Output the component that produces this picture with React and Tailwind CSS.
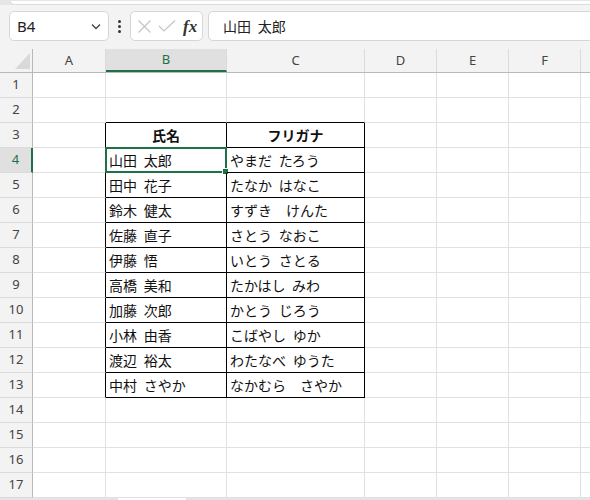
import React from 'react';

const cols = [
  { key: 'A', w: 'w-[73px]' },
  { key: 'B', w: 'w-[121px]' },
  { key: 'C', w: 'w-[138px]' },
  { key: 'D', w: 'w-[72px]' },
  { key: 'E', w: 'w-[72px]' },
  { key: 'F', w: 'w-[72px]' },
  { key: 'G', w: 'w-[72px]' },
];

const people = [
  ['山田 太郎', 'やまだ たろう'],
  ['田中 花子', 'たなか はなこ'],
  ['鈴木 健太', 'すずき　けんた'],
  ['佐藤 直子', 'さとう なおこ'],
  ['伊藤 悟', 'いとう さとる'],
  ['高橋 美和', 'たかはし みわ'],
  ['加藤 次郎', 'かとう じろう'],
  ['小林 由香', 'こばやし ゆか'],
  ['渡辺 裕太', 'わたなべ ゆうた'],
  ['中村 さやか', 'なかむら　さやか'],
];

const font = { fontFamily: '"Noto Sans", "Noto Sans CJK JP", sans-serif' };

function FormulaBar() {
  return (
    <div className="bg-[#f3f3f3]">
      <div className="h-[5px] bg-[#e6e6e6] pt-px">
        <div className="ml-[10px] h-full rounded-bl-md border-b border-l border-[#dcdcdc] bg-white" />
      </div>
      <div className="flex items-center pl-[9px] pt-[6px] pb-[8px]">
        <div className="flex h-[30px] w-[100px] items-center justify-between rounded-[5px] border border-[#d6d6d6] bg-white pl-[7px] pr-[6px] text-[15px] text-[#222]">
          <span className="mt-px">B4</span>
          <svg width="12" height="12" viewBox="0 0 12 12" fill="none" stroke="#444" strokeWidth="1.3">
            <path d="M2 4.5 L6 8.5 L10 4.5" />
          </svg>
        </div>
        <div className="flex w-[21px] flex-col items-center gap-[2px]">
          <span className="h-[3px] w-[3px] rounded-full bg-[#333]" />
          <span className="h-[3px] w-[3px] rounded-full bg-[#333]" />
          <span className="h-[3px] w-[3px] rounded-full bg-[#333]" />
        </div>
        <div className="flex h-[30px] w-[73px] items-center rounded-[5px] border border-[#d6d6d6] bg-white pl-[6px]">
          <svg width="15" height="15" viewBox="0 0 15 15" fill="none" stroke="#c4c4c4" strokeWidth="1.2">
            <path d="M1.5 1.5 L13.5 13.5 M13.5 1.5 L1.5 13.5" />
          </svg>
          <svg className="ml-[6px]" width="18" height="14" viewBox="0 0 18 14" fill="none" stroke="#c4c4c4" strokeWidth="1.2">
            <path d="M1 7 L6 12 L17 1.5" />
          </svg>
          <span className="ml-[7px] text-[17px] font-bold italic leading-none text-[#333]" style={{ fontFamily: '"Liberation Serif", serif' }}>
            fx
          </span>
        </div>
        <div className="ml-[5px] -mr-[4px] flex h-[30px] flex-1 items-center rounded-[5px] border border-[#d6d6d6] bg-white pl-[14px] text-[14px] text-[#222] [word-spacing:3px]">
          山田 太郎
        </div>
      </div>
    </div>
  );
}

function Cell({ col, row, children }) {
  const inTable = (col === 'B' || col === 'C') && row >= 3 && row <= 13;
  const aboveTable = (col === 'B' || col === 'C') && row === 2;
  const leftOfTable = col === 'A' && row >= 3 && row <= 13;
  const rightBlack = inTable || leftOfTable;
  const bottomBlack = inTable || aboveTable;
  const width = cols.find((c) => c.key === col).w;
  const header = row === 3;
  return (
    <div
      className={`relative flex h-[25px] shrink-0 items-center border-r border-b px-[3px] text-[14px] text-[#111] [word-spacing:3px] ${width} ${
        rightBlack ? 'border-r-black' : 'border-r-[#e1e1e1]'
      } ${bottomBlack ? 'border-b-black' : 'border-b-[#e1e1e1]'} ${header ? 'justify-center font-bold' : ''}`}
    >
      <span className="whitespace-nowrap">{children}</span>
      {col === 'B' && row === 4 && (
        <div className="absolute -left-px -top-px h-[26px] w-[122px] border-2 border-[#1e7145]">
          <div className="absolute -bottom-[4px] -right-[4px] h-[7px] w-[7px] border border-white bg-[#1e7145]" />
        </div>
      )}
    </div>
  );
}

function cellValue(col, row) {
  if (row === 3) return col === 'B' ? '氏名' : col === 'C' ? 'フリガナ' : '';
  if (row >= 4 && row <= 13) {
    if (col === 'B') return people[row - 4][0];
    if (col === 'C') return people[row - 4][1];
  }
  return '';
}

export default function App() {
  const rows = Array.from({ length: 17 }, (_, i) => i + 1);
  return (
    <div className="h-[500px] w-[590px] overflow-hidden bg-[#f3f3f3]" style={font}>
      <FormulaBar />

      {/* column headers */}
      <div className="flex h-[24px] border-b border-[#b9b9b9]">
        <div className="relative w-[33px] shrink-0 border-r border-[#b9b9b9]">
          <svg className="absolute left-[15px] top-[4px]" width="15" height="16" viewBox="0 0 15 16">
            <polygon points="15,0 15,16 0,16" fill="#d9d9d9" />
          </svg>
        </div>
        {cols.map((c) => (
          <div
            key={c.key}
            className={`flex shrink-0 items-center justify-center border-r border-[#dadada] text-[13px] ${c.w} ${
              c.key === 'B'
                ? 'border-b-2 border-b-[#1e7145] bg-[#e0e0e0] text-[#1e7145]'
                : 'text-[#444]'
            }`}
          >
            {c.key !== 'G' && c.key}
          </div>
        ))}
      </div>

      {rows.map((r) => (
        <div key={r} className="flex">
          <div
            className={`flex h-[25px] w-[33px] shrink-0 items-center justify-center border-b border-b-[#dadada] border-r text-[13px] ${
              r === 4
                ? 'border-r-2 border-r-[#1e7145] bg-[#e0e0e0] text-[#1e7145]'
                : 'border-r-[#b9b9b9] text-[#444]'
            }`}
          >
            {r}
          </div>
          <div className="flex bg-white">
            {cols.map((c) => (
              <Cell key={c.key} col={c.key} row={r}>
                {cellValue(c.key, r)}
              </Cell>
            ))}
          </div>
        </div>
      ))}

      {/* sheet tab strip */}
      <div className="flex h-[4px] bg-[#e4e4e4]">
        <div className="ml-[118px] w-[68px] bg-white" />
      </div>
    </div>
  );
}
